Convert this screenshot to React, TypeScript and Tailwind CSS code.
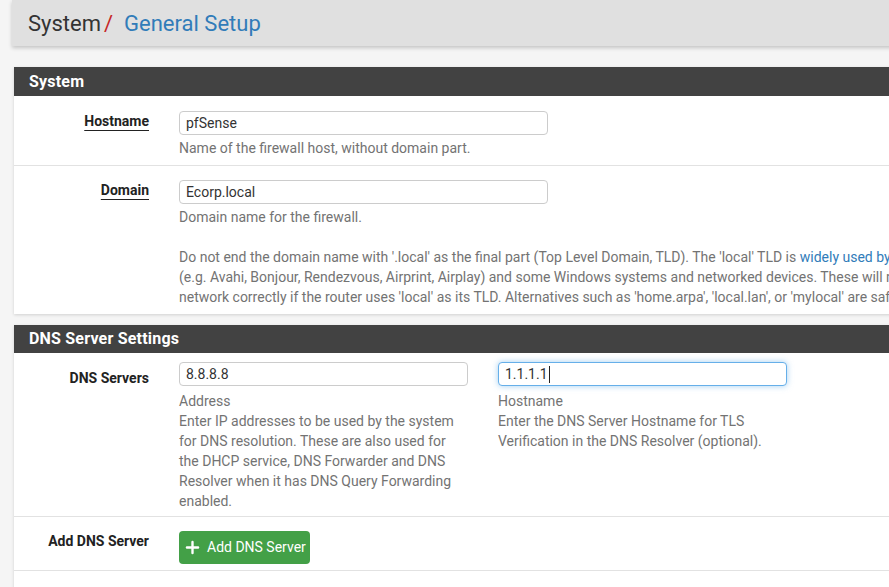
import { Plus } from "lucide-react";

const Label = ({ text, underline }: { text: string; underline?: boolean }) => (
  <div className="w-[150px] shrink-0 pr-[15px] text-right text-[14px] font-bold leading-[20px] text-[#222]">
    <span className={underline ? "underline decoration-1 underline-offset-[4px]" : ""}>{text}</span>
  </div>
);

const Input = ({ value, width, focused }: { value: string; width: string; focused?: boolean }) => (
  <div
    className={`flex h-[24px] items-center rounded-[4px] border bg-white px-[6px] text-[14px] text-[#333] ${width} ${
      focused
        ? "border-[#66afe9] shadow-[0_0_6px_rgba(102,175,233,0.6)]"
        : "border-[#cccccc]"
    }`}
  >
    <span>{value}</span>
    {focused && <span className="ml-[1px] h-[17px] w-px bg-[#222]"></span>}
  </div>
);

const PanelHeader = ({ title, height }: { title: string; height: string }) => (
  <div className={`flex items-center bg-[#424242] pl-[15px] text-[16px] font-bold tracking-[0.2px] text-white ${height}`}>
    {title}
  </div>
);

export default function App() {
  return (
    <div
      className="h-[587px] w-[889px] overflow-hidden bg-[#f5f5f5]"
      style={{ fontFamily: "Roboto, 'Liberation Sans', sans-serif" }}
    >
      <div className="w-[1150px]">
        <div className="ml-[12px] flex h-[46px] items-center bg-[#e0e0e0] pl-[16px] text-[22px] shadow-[0_2px_4px_rgba(0,0,0,0.2)]">
          <span className="text-[#333]">System</span>
          <span className="ml-[3px] text-[#c62828]">/</span>
          <span className="ml-[11px] text-[#317cb9]">General Setup</span>
        </div>

        <div className="ml-[14px] mt-[21px] bg-white shadow-[0_1px_3px_rgba(0,0,0,0.15)]">
          <PanelHeader title="System" height="h-[29px]" />
          <div className="flex border-b border-[#e2e2e2] pb-[7px] pt-[15px]">
            <Label text="Hostname" underline />
            <div className="pl-[15px]">
              <Input value="pfSense" width="w-[369px]" />
              <div className="mt-[3px] text-[14px] leading-[20px] text-[#737373]">
                Name of the firewall host, without domain part.
              </div>
            </div>
          </div>
          <div className="flex pb-[7px] pt-[14px]">
            <Label text="Domain" underline />
            <div className="pl-[15px]">
              <Input value="Ecorp.local" width="w-[369px]" />
              <div className="mt-[3px] whitespace-nowrap text-[14px] leading-[20px] text-[#737373]">
                <div>Domain name for the firewall.</div>
                <div className="h-[20px]"></div>
                <div>
                  Do not end the domain name with '.local' as the final part (Top Level Domain, TLD). The 'local' TLD is{" "}
                  <span className="text-[#317cb9]">widely used by</span> mDNS
                </div>
                <div>
                  (e.g. Avahi, Bonjour, Rendezvous, Airprint, Airplay) and some Windows systems and networked devices. These will not
                </div>
                <div>
                  network correctly if the router uses 'local' as its TLD. Alternatives such as 'home.arpa', 'local.lan', or 'mylocal' are safe.
                </div>
              </div>
            </div>
          </div>
        </div>

        <div className="ml-[14px] mt-[11px] h-[300px] bg-white shadow-[0_1px_3px_rgba(0,0,0,0.15)]">
          <PanelHeader title="DNS Server Settings" height="h-[28px]" />
          <div className="flex border-b border-[#e2e2e2] pb-[5px] pt-[9px]">
            <div className="pt-[6px]">
              <Label text="DNS Servers" />
            </div>
            <div className="flex gap-[30px] pl-[15px] text-[14px] leading-[20px] text-[#737373]">
              <div className="w-[289px]">
                <Input value="8.8.8.8" width="w-[289px]" />
                <div className="mt-[5px]">Address</div>
                <div>
                  Enter IP addresses to be used by the system
                  <br />
                  for DNS resolution. These are also used for
                  <br />
                  the DHCP service, DNS Forwarder and DNS
                  <br />
                  Resolver when it has DNS Query Forwarding
                  <br />
                  enabled.
                </div>
              </div>
              <div className="w-[289px]">
                <Input value="1.1.1.1" width="w-[289px]" focused />
                <div className="mt-[5px]">Hostname</div>
                <div>
                  Enter the DNS Server Hostname for TLS
                  <br />
                  Verification in the DNS Resolver (optional).
                </div>
              </div>
            </div>
          </div>
          <div className="flex border-b border-[#e2e2e2] pb-[6px] pt-[14px]">
            <Label text="Add DNS Server" />
            <div className="pl-[15px]">
              <button className="flex h-[33px] items-center gap-[5px] rounded-[4px] bg-[#43a047] pl-[4px] pr-[4px] text-[14px] text-white">
                <Plus size={19} strokeWidth={3} />
                Add DNS Server
              </button>
            </div>
          </div>
        </div>
      </div>
    </div>
  );
}
